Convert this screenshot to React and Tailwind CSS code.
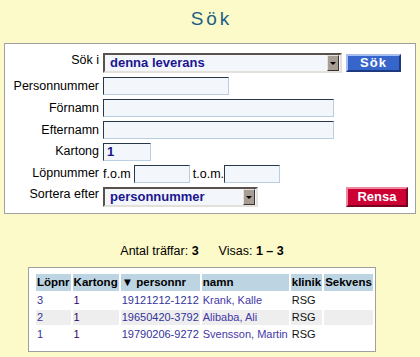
const inputCls =
  'h-[18px] bg-[#f3f7fb] border border-t-[#29374a] border-l-[#29374a] border-b-[#b9cee2] border-r-[#b9cee2] outline-none px-[3px] text-[13px] font-bold text-[#1c1591]';

function Select({ value, width }) {
  return (
    <div
      className={`${width} h-[20px] flex items-center bg-[#f3f7fb] border-2 border-t-[#5a514c] border-l-[#5a514c] border-b-[#e4e0dc] border-r-[#e4e0dc]`}
    >
      <span className="flex-1 pl-[5px] text-[13px] font-bold text-[#1c1591] leading-[16px]">{value}</span>
      <span className="w-[12px] h-[16px] mr-[1px] flex items-center justify-center bg-[#a89d94] border border-t-[#e8e2dc] border-l-[#e8e2dc] border-b-[#3a3430] border-r-[#3a3430]">
        <span className="w-0 h-0 border-l-[3px] border-r-[3px] border-t-[3px] border-l-transparent border-r-transparent border-t-black" />
      </span>
    </div>
  );
}

const rows = [
  { lopnr: '3', kartong: '1', pnr: '19121212-1212', namn: 'Krank, Kalle', klinik: 'RSG' },
  { lopnr: '2', kartong: '1', pnr: '19650420-3792', namn: 'Alibaba, Ali', klinik: 'RSG' },
  { lopnr: '1', kartong: '1', pnr: '19790206-9272', namn: 'Svensson, Martin', klinik: 'RSG' },
];

export default function App() {
  return (
    <div className="min-h-screen bg-[#fcfac8] font-['Liberation_Sans',Arial,sans-serif] text-[12.5px] text-black">
      <h1 className="h-[43px] pt-[8px] pl-[3px] text-center text-[19px] leading-[22px] tracking-[3px] text-[#1b5f86]">
        Sök
      </h1>

      <div className="ml-[4px] w-[412px] bg-white border border-[#a0a0a0] pt-[9px] pb-[6px]">
        <div className="grid grid-cols-[98px_243px_1fr] gap-y-[4px] items-center">
          <label className="text-right pr-[4px] pb-[5px] leading-[15px]">Sök i</label>
          <Select value="denna leverans" width="w-[239px]" />
          <button
            type="button"
            className="w-[55px] h-[18px] bg-[#3665cc] border-2 border-t-[#a6bff0] border-l-[#a6bff0] border-b-[#1d3a80] border-r-[#1d3a80] text-white text-[13px] font-bold leading-[14px] tracking-[1px]"
          >
            Sök
          </button>

          <label className="text-right pr-[4px] leading-[15px]">Personnummer</label>
          <input className={`${inputCls} w-[126px] col-span-2`} />

          <label className="text-right pr-[4px] leading-[15px]">Förnamn</label>
          <input className={`${inputCls} w-[231px] col-span-2`} />

          <label className="text-right pr-[4px] leading-[15px]">Efternamn</label>
          <input className={`${inputCls} w-[231px] col-span-2`} />

          <label className="text-right pr-[4px] pb-[1px] leading-[15px]">Kartong</label>
          <input className={`${inputCls} w-[48px] col-span-2`} defaultValue="1" />

          <label className="text-right pr-[4px] pb-[2px] leading-[15px]">Löpnummer</label>
          <div className="col-span-2 flex items-center">
            <span className="pr-[3px] leading-[15px]">f.o.m</span>
            <input className={`${inputCls} w-[56px]`} />
            <span className="pl-[3px] leading-[15px]">t.o.m.</span>
            <input className={`${inputCls} w-[56px]`} />
          </div>

          <label className="text-right pr-[4px] pb-[5px] leading-[15px]">Sortera efter</label>
          <Select value="personnummer" width="w-[155px]" />
          <button
            type="button"
            className="w-[62px] h-[20px] bg-[#cc0033] border-2 border-t-[#ec8aa2] border-l-[#ec8aa2] border-b-[#7a0020] border-r-[#7a0020] text-white text-[13px] font-bold leading-[14px]"
          >
            Rensa
          </button>
        </div>
      </div>

      <p className="ml-[28px] w-[348px] mt-[30px] text-center leading-[15px]">
        Antal träffar: <b>3</b>
        <span className="inline-block w-[20px]" />
        Visas: <b>1 – 3</b>
      </p>

      <div className="ml-[28px] mt-[8px] w-[348px] bg-white border border-[#a0a0a0] pl-[5px] pt-[4px] pb-[7px]">
        <table className="border-separate border-spacing-0.5 whitespace-nowrap">
          <thead>
            <tr className="h-[17px] bg-[#bdd4e2] text-[11.5px] font-bold text-left">
              <th className="px-[1px] leading-[17px]">Löpnr</th>
              <th className="px-[1px] leading-[17px]">Kartong</th>
              <th className="px-[1px] leading-[17px]">▼ personnr</th>
              <th className="px-[1px] leading-[17px]">namn</th>
              <th className="px-[1px] leading-[17px]">klinik</th>
              <th className="px-[1px] leading-[17px]">Sekvens</th>
            </tr>
          </thead>
          <tbody>
            {rows.map((r, i) => (
              <tr key={r.pnr} className={`h-[15px] text-[11px] text-[#333399] ${i === 1 ? 'bg-[#eeeeee]' : ''}`}>
                <td className="px-[1px] leading-[15px]">{r.lopnr}</td>
                <td className="px-[1px] leading-[15px] text-[#330066]">{r.kartong}</td>
                <td className="px-[1px] leading-[15px]">{r.pnr}</td>
                <td className="px-[1px] leading-[15px] text-[#4438a8]">{r.namn}</td>
                <td className="px-[1px] leading-[15px] text-[#111111]">{r.klinik}</td>
                <td className="px-[1px] leading-[15px]"></td>
              </tr>
            ))}
          </tbody>
        </table>
      </div>
    </div>
  );
}
